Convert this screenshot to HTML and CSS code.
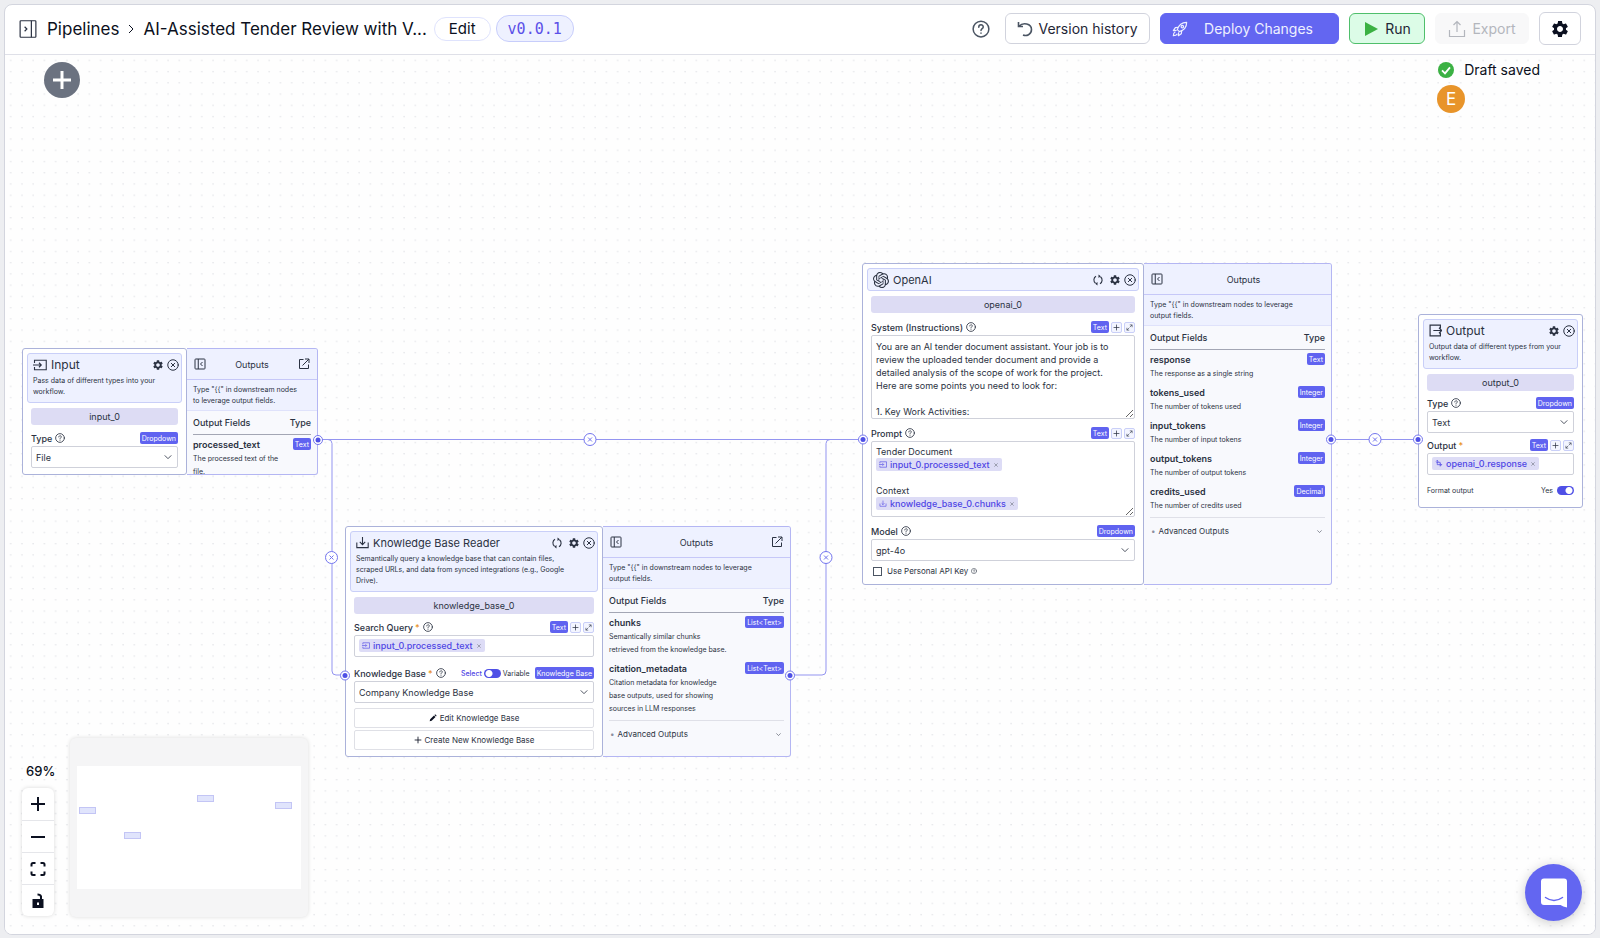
FILE: index.html
```html
<!DOCTYPE html>
<html lang="en">
<head>
    <meta charset="UTF-8">
    <meta name="viewport" content="width=device-width, initial-scale=1.0">
    <title>AI-Assisted Tender Review - Pipelines</title>
    <link rel="stylesheet" href="styles.css">
</head>
<body>
    <!-- icon sprite -->
    <svg class="sprite" aria-hidden="true">
        <symbol id="i-gear" viewBox="0 0 24 24"><path fill="currentColor" d="M19.14 12.94c.04-.3.06-.61.06-.94 0-.32-.02-.64-.07-.94l2.03-1.58c.18-.14.23-.41.12-.61l-1.92-3.32c-.12-.22-.37-.29-.59-.22l-2.39.96c-.5-.38-1.03-.7-1.62-.94l-.36-2.54c-.04-.24-.24-.41-.48-.41h-3.84c-.24 0-.43.17-.47.41l-.36 2.54c-.59.24-1.13.57-1.62.94l-2.39-.96c-.22-.08-.47 0-.59.22L2.74 8.87c-.12.21-.08.47.12.61l2.03 1.58c-.05.3-.09.63-.09.94s.02.64.07.94l-2.03 1.58c-.18.14-.23.41-.12.61l1.92 3.32c.12.22.37.29.59.22l2.39-.96c.5.38 1.03.7 1.62.94l.36 2.54c.05.24.24.41.48.41h3.84c.24 0 .44-.17.47-.41l.36-2.54c.59-.24 1.13-.56 1.62-.94l2.39.96c.22.08.47 0 .59-.22l1.92-3.32c.12-.22.07-.47-.12-.61l-2.01-1.58zM12 15.6c-1.98 0-3.6-1.62-3.6-3.6s1.62-3.6 3.6-3.6 3.6 1.62 3.6 3.6-1.62 3.6-3.6 3.6z"/></symbol>
        <symbol id="i-close" viewBox="0 0 24 24"><g fill="none" stroke="currentColor" stroke-width="2" stroke-linecap="round"><circle cx="12" cy="12" r="10.500"/><path d="M8.500 8.500l7 7M15.500 8.500l-7 7"/></g></symbol>
        <symbol id="i-sync" viewBox="0 0 24 24"><g fill="none" stroke="currentColor" stroke-width="2.200"><path d="M8 4.500A8.500 8.500 0 0 0 7 18.500M16 19.500A8.500 8.500 0 0 0 17 5.500"/></g><path fill="currentColor" d="M13 .8v7L17.500 4.300zM11 23.200v-7l-4.500 3.500z"/></symbol>
        <symbol id="i-help" viewBox="0 0 24 24"><g fill="none" stroke="currentColor" stroke-width="2" stroke-linecap="round"><circle cx="12" cy="12" r="10.500"/><path d="M9 9.500c0-4 6-4 6-.3 0 2.300-3 2.500-3 4.800M12 17.300v.2"/></g></symbol>
        <symbol id="i-chevron" viewBox="0 0 24 24"><path fill="none" stroke="currentColor" stroke-width="2.500" stroke-linecap="round" stroke-linejoin="round" d="M3 8l9 9 9-9"/></symbol>
        <symbol id="i-expand" viewBox="0 0 24 24"><path fill="none" stroke="currentColor" stroke-width="2" d="M13 3h8v8M21 3l-8 8M11 21H3v-8M3 21l8-8"/></symbol>
        <symbol id="i-plus" viewBox="0 0 24 24"><path fill="none" stroke="currentColor" stroke-width="2.500" d="M12 2v20M2 12h20"/></symbol>
        <symbol id="i-x" viewBox="0 0 24 24"><path fill="none" stroke="currentColor" stroke-width="4" d="M2 2l20 20M22 2L2 22"/></symbol>
        <symbol id="i-panel-close" viewBox="0 0 24 24"><g fill="none" stroke="currentColor" stroke-width="2"><rect x="2" y="2" width="20" height="20" rx="1.500"/><path d="M8.500 2v20M17 8l-4 4 4 4"/></g></symbol>
        <symbol id="i-panel-open" viewBox="0 0 24 24"><g fill="none" stroke="currentColor" stroke-width="1.600"><rect x="1.500" y="1" width="21" height="22" rx="1"/><path d="M16.500 1v22"/><path d="M7.500 9l3 3-3 3"/></g></symbol>
        <symbol id="i-external" viewBox="0 0 24 24"><path fill="none" stroke="currentColor" stroke-width="2" d="M11 3H3v18h18v-8M14 2h8v8M22 2L9 15"/></symbol>
        <symbol id="i-input" viewBox="0 0 28 22"><path fill="none" stroke="currentColor" stroke-width="2.200" d="M3 7V1.500h23.500v19H3V15M0 11h16M12 6.500l4.500 4.500-4.500 4.500"/></symbol>
        <symbol id="i-output" viewBox="0 0 24 24"><path fill="none" stroke="currentColor" stroke-width="2.200" d="M21 8V2H2v20h19v-6M8 12h15M18.500 7l5 5-5 5"/></symbol>
        <symbol id="i-download" viewBox="0 0 24 24"><path fill="none" stroke="currentColor" stroke-width="2" d="M12 2v14M7 11l5 5 5-5M1.500 12v9.500h21V12"/></symbol>
        <symbol id="i-link" viewBox="0 0 24 24"><path fill="none" stroke="currentColor" stroke-width="2.500" d="M6 2v14h15M17 12l4 4-4 4M16 22V8H3M10 5L6 1 2 5"/></symbol>
        <symbol id="i-pencil" viewBox="0 0 24 24"><path fill="currentColor" d="M2 22l1.500-6L15 4.500 19.500 9 8 20.500zM16.500 3l2-2 4.500 4.500-2 2z"/></symbol>
        <symbol id="i-openai" viewBox="0 0 24 24"><path fill="currentColor" d="M22.2819 9.8211a5.9847 5.9847 0 0 0-.5157-4.9108 6.0462 6.0462 0 0 0-6.5098-2.9A6.0651 6.0651 0 0 0 4.9807 4.1818a5.9847 5.9847 0 0 0-3.9977 2.9 6.0462 6.0462 0 0 0 .7427 7.0966 5.98 5.98 0 0 0 .511 4.9107 6.051 6.051 0 0 0 6.5146 2.9001A5.9847 5.9847 0 0 0 13.2599 24a6.0557 6.0557 0 0 0 5.7718-4.2058 5.9894 5.9894 0 0 0 3.9977-2.9001 6.0557 6.0557 0 0 0-.7475-7.0729zm-9.022 12.6081a4.4755 4.4755 0 0 1-2.8764-1.0408l.1419-.0804 4.7783-2.7582a.7948.7948 0 0 0 .3927-.6813v-6.7369l2.02 1.1686a.071.071 0 0 1 .038.052v5.5826a4.504 4.504 0 0 1-4.4945 4.4944zm-9.6607-4.1254a4.4708 4.4708 0 0 1-.5346-3.0137l.142.0852 4.783 2.7582a.7712.7712 0 0 0 .7806 0l5.8428-3.3685v2.3324a.0804.0804 0 0 1-.0332.0615L9.74 19.9502a4.4992 4.4992 0 0 1-6.1408-1.6464zM2.3408 7.8956a4.485 4.485 0 0 1 2.3655-1.9728V11.6a.7664.7664 0 0 0 .3879.6765l5.8144 3.3543-2.0201 1.1685a.0757.0757 0 0 1-.071 0l-4.8303-2.7865A4.504 4.504 0 0 1 2.3408 7.872zm16.5963 3.8558L13.1038 8.364 15.1192 7.2a.0757.0757 0 0 1 .071 0l4.8303 2.7913a4.4944 4.4944 0 0 1-.6765 8.1042v-5.6772a.79.79 0 0 0-.407-.667zm2.0107-3.0231l-.142-.0852-4.7735-2.7818a.7759.7759 0 0 0-.7854 0L9.409 9.2297V6.8974a.0662.0662 0 0 1 .0284-.0615l4.8303-2.7866a4.4992 4.4992 0 0 1 6.6802 4.66zM8.3065 12.863l-2.02-1.1638a.0804.0804 0 0 1-.038-.0567V6.0742a4.4992 4.4992 0 0 1 7.3757-3.4537l-.142.0805L8.704 5.459a.7948.7948 0 0 0-.3927.6813zm1.0976-2.3654l2.602-1.4998 2.6069 1.4998v2.9994l-2.5974 1.4997-2.6067-1.4997Z"/></symbol>
    </svg>

    <div class="app">
        <header class="topbar">
            <button class="icon-btn" aria-label="Open sidebar"><svg class="icon-18"><use href="#i-panel-open"/></svg></button>
            <nav class="crumbs">
                <a href="#">Pipelines</a>
                <svg class="crumb-arrow" viewBox="0 0 8 12"><path d="M2 2l4 4-4 4"/></svg>
                <span>AI-Assisted Tender Review with V...</span>
            </nav>
            <button class="pill">Edit</button>
            <span class="pill version">v0.0.1</span>
            <div class="actions">
                <button class="icon-btn help" aria-label="Help"><svg class="icon-18"><use href="#i-help"/></svg></button>
                <button class="btn history">
                    <svg class="icon-16" viewBox="0 0 16 16"><path fill="none" stroke="#4b5563" stroke-width="1.600" d="M1.500 1v4.500H6M2 5.200C6 1 14.500 2.500 14.500 8.500c0 5-5 7-8.500 5.500"/></svg>
                    Version history
                </button>
                <button class="btn deploy">
                    <svg class="icon-16" viewBox="0 0 24 24"><g fill="none" stroke="currentColor" stroke-width="1.800" stroke-linejoin="round"><path d="M8 13C10 6 15 2 22 2c0 7-4 12-11 14z"/><path d="M9 9.500L5 10l-3 4.500 5-.5M14.500 15L14 19l-4.500 3 .5-5M5 16c-2 1-3 3-3 6 3 0 5-1 6-3"/><circle cx="15.500" cy="8.500" r="1.800"/></g></svg>
                    <span>Deploy Changes</span>
                </button>
                <button class="btn run">
                    <svg class="icon-16" viewBox="0 0 16 16"><path fill="#3bb143" d="M2 1l13 7-13 7z"/></svg>
                    Run
                </button>
                <button class="btn export" disabled>
                    <svg class="icon-18" viewBox="0 0 18 18"><path fill="none" stroke="currentColor" stroke-width="1.200" d="M9 12V1.500M5.500 5L9 1.500 12.500 5M1.500 10v6.500h15V10"/></svg>
                    Export
                </button>
                <button class="btn settings" aria-label="Settings"><svg class="icon-20"><use href="#i-gear"/></svg></button>
            </div>
        </header>

        <main class="canvas">
            <svg class="dots" aria-hidden="true">
                <defs>
                    <pattern id="dot" x="0" y="0" width="11.24" height="11.24" patternUnits="userSpaceOnUse"><circle cx="5.700" cy="5.500" r=".7" fill="#dcdde1"/></pattern>
                </defs>
                <rect width="100%" height="100%" fill="url(#dot)"/>
            </svg>

            <div class="viewport">
                <svg class="edges" width="1600" height="938" aria-hidden="true">
                    <g fill="none" stroke="#9394f0">
                        <path d="M318 439.500H863M318 439.500H328q4 0 4 4V671q0 4 4 4H345M790 675H822q4 0 4-4V443.500q0-4 4-4H863M1331 439.500H1418"/>
                    </g>
                    <g fill="#fff" stroke="#7375ee">
                        <circle cx="590" cy="439.500" r="6"/><circle cx="331.500" cy="557.500" r="6"/><circle cx="826" cy="557.500" r="6"/><circle cx="1375" cy="439.500" r="6"/>
                        <path d="M588 437.500l4 4m0-4l-4 4M329.500 555.500l4 4m0-4l-4 4M824 555.500l4 4m0-4l-4 4M1373 437.500l4 4m0-4l-4 4"/>
                    </g>
                </svg>

                <section class="node node-input">
                    <div class="card">
                        <div class="card-head">
                            <div class="title-row">
                                <svg class="icon-input"><use href="#i-input"/></svg>
                                <h2>Input</h2>
                                <button aria-label="Node settings"><svg class="icon-12"><use href="#i-gear"/></svg></button>
                                <button aria-label="Delete node"><svg class="icon-12"><use href="#i-close"/></svg></button>
                            </div>
                            <p>Pass data of different types into your workflow.</p>
                        </div>
                        <div class="fields">
                            <input class="node-id" value="input_0" aria-label="Node name">
                            <div class="field">
                                <div class="label-row"><label for="in-type">Type</label><svg class="icon-10"><use href="#i-help"/></svg><span class="badge">Dropdown</span></div>
                                <div class="select"><select id="in-type"><option>File</option></select><svg><use href="#i-chevron"/></svg></div>
                            </div>
                        </div>
                    </div>
                    <div class="outputs">
                        <div class="out-head">
                            <button aria-label="Collapse"><svg class="icon-12"><use href="#i-panel-close"/></svg></button>
                            <h3>Outputs</h3>
                            <button aria-label="Open"><svg class="icon-12"><use href="#i-external"/></svg></button>
                        </div>
                        <p class="out-info">Type "{{" in downstream nodes to leverage output fields.</p>
                        <table>
                            <thead><tr><th>Output Fields</th><th>Type</th></tr></thead>
                            <tbody><tr><td><b>processed_text</b><p>The processed text of the file.</p></td><td><span class="badge">Text</span></td></tr></tbody>
                        </table>
                    </div>
                </section>

                <section class="node node-kb">
                    <div class="card">
                        <div class="card-head">
                            <div class="title-row">
                                <svg class="icon-14"><use href="#i-download"/></svg>
                                <h2>Knowledge Base Reader</h2>
                                <button class="sync" aria-label="Refresh"><svg class="icon-12"><use href="#i-sync"/></svg></button>
                                <button aria-label="Node settings"><svg class="icon-12"><use href="#i-gear"/></svg></button>
                                <button aria-label="Delete node"><svg class="icon-12"><use href="#i-close"/></svg></button>
                            </div>
                            <p>Semantically query a knowledge base that can contain files, scraped URLs, and data from synced integrations (e.g., Google Drive).</p>
                        </div>
                        <div class="fields">
                            <input class="node-id" value="knowledge_base_0" aria-label="Node name">
                            <div class="field">
                                <div class="label-row"><span id="kb-q">Search Query</span><i>*</i><svg class="icon-10"><use href="#i-help"/></svg><span class="badge">Text</span><button class="mini" aria-label="Add"><svg><use href="#i-plus"/></svg></button><button class="mini" aria-label="Expand"><svg><use href="#i-expand"/></svg></button></div>
                                <div class="box" role="textbox" contenteditable="true" aria-labelledby="kb-q" spellcheck="false"><span class="chip"><svg><use href="#i-input"/></svg>input_0.processed_text<svg class="rm"><use href="#i-x"/></svg></span></div>
                            </div>
                            <div class="field kb-field">
                                <div class="label-row"><label for="kb-sel">Knowledge Base</label><i>*</i><svg class="icon-10"><use href="#i-help"/></svg>
                                    <label class="mode"><b>Select</b><input type="checkbox" class="switch left"><span>Variable</span></label>
                                    <span class="badge">Knowledge Base</span></div>
                                <div class="select"><select id="kb-sel"><option>Company Knowledge Base</option></select><svg><use href="#i-chevron"/></svg></div>
                            </div>
                            <div class="kb-actions">
                                <button><svg><use href="#i-pencil"/></svg>Edit Knowledge Base</button>
                                <button><svg><use href="#i-plus"/></svg>Create New Knowledge Base</button>
                            </div>
                        </div>
                    </div>
                    <div class="outputs">
                        <div class="out-head">
                            <button aria-label="Collapse"><svg class="icon-12"><use href="#i-panel-close"/></svg></button>
                            <h3>Outputs</h3>
                            <button aria-label="Open"><svg class="icon-12"><use href="#i-external"/></svg></button>
                        </div>
                        <p class="out-info">Type "{{" in downstream nodes to leverage output fields.</p>
                        <table>
                            <thead><tr><th>Output Fields</th><th>Type</th></tr></thead>
                            <tbody>
                                <tr><td><b>chunks</b><p>Semantically similar chunks retrieved from the knowledge base.</p></td><td><span class="badge">List&lt;Text&gt;</span></td></tr>
                                <tr><td><b>citation_metadata</b><p>Citation metadata for knowledge base outputs, used for showing sources in LLM responses</p></td><td><span class="badge">List&lt;Text&gt;</span></td></tr>
                            </tbody>
                        </table>
                        <button class="advanced"><span>Advanced Outputs</span><svg><use href="#i-chevron"/></svg></button>
                    </div>
                </section>

                <section class="node node-openai">
                    <div class="card">
                        <div class="card-head">
                            <div class="title-row">
                                <svg class="icon-16"><use href="#i-openai"/></svg>
                                <h2>OpenAI</h2>
                                <button class="sync" aria-label="Refresh"><svg class="icon-12"><use href="#i-sync"/></svg></button>
                                <button aria-label="Node settings"><svg class="icon-12"><use href="#i-gear"/></svg></button>
                                <button aria-label="Delete node"><svg class="icon-12"><use href="#i-close"/></svg></button>
                            </div>
                        </div>
                        <div class="fields">
                            <input class="node-id" value="openai_0" aria-label="Node name">
                            <div class="field">
                                <div class="label-row"><label for="ai-sys">System (Instructions)</label><svg class="icon-10"><use href="#i-help"/></svg><span class="badge">Text</span><button class="mini" aria-label="Add"><svg><use href="#i-plus"/></svg></button><button class="mini" aria-label="Expand"><svg><use href="#i-expand"/></svg></button></div>
                                <textarea id="ai-sys" class="box system" spellcheck="false">You are an AI tender document assistant. Your job is to review the uploaded tender document and provide a detailed analysis of the scope of work for the project. Here are some points you need to look for:

1. Key Work Activities:</textarea>
                            </div>
                            <div class="field">
                                <div class="label-row"><span id="ai-prompt">Prompt</span><svg class="icon-10"><use href="#i-help"/></svg><span class="badge">Text</span><button class="mini" aria-label="Add"><svg><use href="#i-plus"/></svg></button><button class="mini" aria-label="Expand"><svg><use href="#i-expand"/></svg></button></div>
                                <div class="box prompt" role="textbox" contenteditable="true" aria-labelledby="ai-prompt" spellcheck="false">
                                    <div>Tender Document</div>
                                    <div><span class="chip"><svg><use href="#i-input"/></svg>input_0.processed_text<svg class="rm"><use href="#i-x"/></svg></span></div>
                                    <div><br></div>
                                    <div>Context</div>
                                    <div><span class="chip"><svg><use href="#i-download"/></svg>knowledge_base_0.chunks<svg class="rm"><use href="#i-x"/></svg></span></div>
                                </div>
                            </div>
                            <div class="field">
                                <div class="label-row"><label for="ai-model">Model</label><svg class="icon-10"><use href="#i-help"/></svg><span class="badge">Dropdown</span></div>
                                <div class="select"><select id="ai-model"><option>gpt-4o</option></select><svg><use href="#i-chevron"/></svg></div>
                            </div>
                            <label class="api-key"><input type="checkbox">Use Personal API Key<svg><use href="#i-help"/></svg></label>
                        </div>
                    </div>
                    <div class="outputs">
                        <div class="out-head">
                            <button aria-label="Collapse"><svg class="icon-12"><use href="#i-panel-close"/></svg></button>
                            <h3>Outputs</h3>
                        </div>
                        <p class="out-info">Type "{{" in downstream nodes to leverage output fields.</p>
                        <table>
                            <thead><tr><th>Output Fields</th><th>Type</th></tr></thead>
                            <tbody>
                                <tr><td><b>response</b><p>The response as a single string</p></td><td><span class="badge">Text</span></td></tr>
                                <tr><td><b>tokens_used</b><p>The number of tokens used</p></td><td><span class="badge">Integer</span></td></tr>
                                <tr><td><b>input_tokens</b><p>The number of input tokens</p></td><td><span class="badge">Integer</span></td></tr>
                                <tr><td><b>output_tokens</b><p>The number of output tokens</p></td><td><span class="badge">Integer</span></td></tr>
                                <tr><td><b>credits_used</b><p>The number of credits used</p></td><td><span class="badge">Decimal</span></td></tr>
                            </tbody>
                        </table>
                        <button class="advanced"><span>Advanced Outputs</span><svg><use href="#i-chevron"/></svg></button>
                    </div>
                </section>

                <section class="node node-output">
                    <div class="card">
                        <div class="card-head">
                            <div class="title-row">
                                <svg class="icon-14"><use href="#i-output"/></svg>
                                <h2>Output</h2>
                                <button aria-label="Node settings"><svg class="icon-12"><use href="#i-gear"/></svg></button>
                                <button aria-label="Delete node"><svg class="icon-12"><use href="#i-close"/></svg></button>
                            </div>
                            <p>Output data of different types from your workflow.</p>
                        </div>
                        <div class="fields">
                            <input class="node-id" value="output_0" aria-label="Node name">
                            <div class="field">
                                <div class="label-row"><label for="out-type">Type</label><svg class="icon-10"><use href="#i-help"/></svg><span class="badge">Dropdown</span></div>
                                <div class="select"><select id="out-type"><option>Text</option></select><svg><use href="#i-chevron"/></svg></div>
                            </div>
                            <div class="field">
                                <div class="label-row"><span id="out-val">Output</span><i>*</i><span class="badge">Text</span><button class="mini" aria-label="Add"><svg><use href="#i-plus"/></svg></button><button class="mini" aria-label="Expand"><svg><use href="#i-expand"/></svg></button></div>
                                <div class="box" role="textbox" contenteditable="true" aria-labelledby="out-val" spellcheck="false"><span class="chip"><svg><use href="#i-link"/></svg>openai_0.response<svg class="rm"><use href="#i-x"/></svg></span></div>
                            </div>
                            <label class="format"><span>Format output</span><span>Yes</span><input type="checkbox" class="switch" checked></label>
                        </div>
                    </div>
                </section>

                <!-- connection handles -->
                <svg class="edges handles" width="1600" height="938" aria-hidden="true">
                    <g fill="#fff" stroke="#7375ee">
                        <circle cx="318" cy="440" r="4.500"/><circle cx="345" cy="675.500" r="4.500"/><circle cx="790" cy="675.500" r="4.500"/><circle cx="863" cy="439.500" r="4.500"/><circle cx="1331" cy="439.500" r="4.500"/><circle cx="1418" cy="439.500" r="4.500"/>
                    </g>
                    <g fill="#4f50e6">
                        <circle cx="318" cy="440" r="2.500"/><circle cx="345" cy="675.500" r="2.500"/><circle cx="790" cy="675.500" r="2.500"/><circle cx="863" cy="439.500" r="2.500"/><circle cx="1331" cy="439.500" r="2.500"/><circle cx="1418" cy="439.500" r="2.500"/>
                    </g>
                </svg>
            </div>

            <button class="add-node" aria-label="Add node"><svg viewBox="0 0 20 20"><path d="M10 1v18M1 10h18"/></svg></button>

            <div class="status">
                <div class="saved"><svg viewBox="0 0 16 16"><circle cx="8" cy="8" r="8" fill="#3bb143"/><path fill="none" stroke="#fff" stroke-width="1.800" d="M4 8.300l3 3 5-6"/></svg>Draft saved</div>
                <div class="avatar">E</div>
            </div>

            <div class="zoom">
                <span>69%</span>
                <div class="zoom-buttons">
                    <button aria-label="Zoom in"><svg viewBox="0 0 16 16"><path d="M8 1v14M1 8h14"/></svg></button>
                    <button aria-label="Zoom out"><svg viewBox="0 0 16 16"><path d="M1 8h14"/></svg></button>
                    <button aria-label="Fit view"><svg viewBox="0 0 16 16"><path d="M1.500 5.500V3.500q0-1.500 1.500-1.500H5.500M10.500 2H13q1.500 0 1.500 1.500V5.500M14.500 10.500V12.500q0 1.500-1.500 1.500H10.500M5.500 14H3q-1.500 0-1.500-1.500V10.500"/></svg></button>
                    <button aria-label="Toggle lock"><svg viewBox="0 0 16 16"><path fill="#0b1020" stroke="none" fill-rule="evenodd" d="M2.500 6h11v9h-11zM7 9.500v2.500h2V9.500z"/><path d="M11 6V3.500Q10.500 1.500 7.500 1.500"/></svg></button>
                </div>
            </div>

            <div class="minimap">
                <svg viewBox="0 0 224 123">
                    <rect width="224" height="123" fill="#fff"/>
                    <g fill="#e0e4fc" stroke="#c3c5f5">
                        <rect x="2.500" y="41.500" width="16" height="6"/><rect x="47.500" y="66.500" width="16" height="6"/><rect x="120.500" y="29.500" width="16" height="6"/><rect x="198.500" y="36.500" width="16" height="6"/>
                    </g>
                </svg>
            </div>

            <button class="chat" aria-label="Open chat"><svg viewBox="0 0 26 30"><path fill="#fff" d="M3 .5h20q3 0 3 3V29.500q-4-1-6.500-2.500H3q-3 0-3-3V3.500q0-3 3-3z"/><path fill="none" stroke="#6366f1" stroke-width="1.500" stroke-linecap="round" d="M4.500 19.500q8.500 6 17 0"/></svg></button>
        </main>
    </div>
</body>
</html>
```
FILE: styles.css
```css
* {
    box-sizing: border-box;
}
body {
    margin: 0;
    height: 100vh;
    padding: 4px 4px 3px;
    background: #edeef1;
    font-family: Inter, sans-serif;
    color: #0b1020;
    overflow: hidden;
}
button, input, select, textarea {
    font: inherit;
    color: inherit;
}
button {
    display: flex;
    align-items: center;
    justify-content: center;
    padding: 0;
    border: none;
    background: none;
    cursor: pointer;
}
svg {
    display: block;
    flex: none;
}
h2, h3, p {
    margin: 0;
    font-weight: 400;
}
.sprite {
    position: absolute;
    width: 0;
    height: 0;
}
.icon-10 { width: 10px; height: 10px; }
.icon-12 { width: 12px; height: 12px; }
.icon-14 { width: 13px; height: 13px; }
.icon-16 { width: 16px; height: 16px; }
.icon-18 { width: 18px; height: 18px; }
.icon-20 { width: 20px; height: 20px; }
.icon-input { width: 14px; height: 12px; }

.app {
    display: flex;
    flex-direction: column;
    height: 100%;
    background: #fff;
    border: 1px solid #d3d5de;
    border-radius: 8px;
    overflow: hidden;
}

/* top bar */
.topbar {
    display: flex;
    align-items: center;
    flex: none;
    height: 50px;
    padding: 0 14px 2px;
    border-bottom: 1px solid #dfe0e8;
}
.crumbs {
    display: flex;
    align-items: center;
    gap: 8px;
    margin: 0 7px 0 10px;
    font-size: 17px;
    white-space: nowrap;
}
.crumbs a {
    color: inherit;
    text-decoration: none;
}
.crumb-arrow {
    width: 8px;
    height: 12px;
    fill: none;
    stroke: #0b1020;
}
.icon-btn {
    color: #2b3242;
}
.pill {
    display: flex;
    align-items: center;
    height: 24px;
    padding: 0 14px;
    border: 1px solid #dfe3fd;
    border-radius: 13px;
    font-size: 15px;
}
.version {
    height: 27px;
    margin-left: 5px;
    padding: 0 11px;
    border-color: #c7cdfb;
    background: #eef1ff;
    color: #5b50e8;
    font-family: "DejaVu Sans Mono", monospace;
}
.actions {
    display: flex;
    align-items: center;
    gap: 10px;
    margin-left: auto;
}
.help {
    margin-right: 5px;
    color: #4b5563;
}
.btn {
    height: 31px;
    gap: 5px;
    padding: 0 14px;
    border: 1px solid #d1d3dd;
    border-radius: 6px;
    background: #fff;
    color: #1f2636;
    font-size: 14px;
    white-space: nowrap;
}
.history {
    width: 145px;
    padding: 0;
}
.deploy {
    width: 179px;
    padding: 0 25px 0 11px;
    justify-content: space-between;
    border-color: #6366f1;
    background: #6366f1;
    color: #eef0ff;
}
.run {
    width: 76px;
    gap: 6px;
    padding: 0;
    border-color: #4fbf6b;
    background: #dcfce7;
}
.export {
    width: 94px;
    gap: 6px;
    padding: 0;
    border-color: #f8f8f9;
    background: #f8f8f9;
    color: #b3b6bd;
}
.settings {
    width: 42px;
    height: 33px;
    padding: 0;
    color: #0b1020;
}

/* canvas */
.canvas {
    position: relative;
    flex: 1;
    background: #fefefe;
    overflow: hidden;
}
.dots {
    position: absolute;
    width: 100%;
    height: 100%;
}
.viewport {
    position: absolute;
    left: -5px;
    top: -55px;
}
.edges {
    position: absolute;
}
.handles {
    pointer-events: none;
}
.node {
    position: absolute;
    display: flex;
    font-size: 9px;
    color: #2b3242;
}
.node-input { left: 22px; top: 348px; width: 296px; height: 127px; }
.node-kb { left: 345px; top: 526px; width: 446px; height: 231px; }
.node-openai { left: 862px; top: 263px; width: 470px; height: 322px; }
.node-output { left: 1418px; top: 314px; width: 165px; height: 194px; }
.card {
    flex: 1;
    padding: 4px;
    border: 1px solid #abb2da;
    border-radius: 3px;
    background: #fff;
}
.card-head {
    padding: 0 2px 0 5px;
    border: 1px solid #c9cff8;
    border-radius: 3px;
    background: #eef1ff;
}
.title-row {
    display: flex;
    align-items: center;
    gap: 3px;
    height: 21px;
}
.title-row h2 {
    flex: 1;
    margin-left: 1px;
    font-size: 12px;
}
.node-kb h2,
.node-openai h2 {
    font-size: 11px;
}
.title-row .sync {
    margin-right: 2px;
}
.card-head p {
    padding-bottom: 5px;
    font-size: 7px;
    line-height: 11px;
}
.node-kb .card-head p {
    padding-right: 16px;
}
.fields {
    display: flex;
    flex-direction: column;
    gap: 8px;
    padding: 5px 4px 0;
}
.node-input .fields,
.node-kb .fields {
    gap: 7px;
}
.node-output .fields {
    gap: 6px;
}
.node-id {
    width: 100%;
    height: 17px;
    padding: 0;
    border: none;
    border-radius: 3px;
    background: #dddcf4;
    text-align: center;
}
.kb-field {
    margin-top: 3px;
}
.label-row {
    display: flex;
    align-items: center;
    gap: 2px;
    height: 12px;
    margin-bottom: 2px;
    font-weight: 500;
}
.label-row i {
    color: #e8901c;
    font-style: normal;
}
.label-row .icon-10 {
    margin-left: 1px;
}
.label-row .badge {
    margin-left: auto;
}
.badge {
    display: inline-flex;
    align-items: center;
    height: 12px;
    padding: 0 2px;
    border-radius: 2px;
    background: #6063f0;
    color: #fff;
    font-size: 7px;
    font-weight: 400;
}
.mini {
    width: 11px;
    height: 11px;
    border: 1px solid #c9cff8;
    border-radius: 2px;
    background: #f3f5ff;
}
.mini svg {
    width: 7px;
    height: 7px;
}
.select {
    display: flex;
    align-items: center;
    height: 22px;
    padding-right: 5px;
    border: 1px solid #cfd1da;
    border-radius: 2px;
    background: #fff;
}
.select select {
    flex: 1;
    height: 100%;
    padding: 0 4px;
    border: none;
    background: none;
    appearance: none;
}
.select svg {
    width: 8px;
    height: 8px;
}
.box {
    display: block;
    min-height: 22px;
    padding: 3px 4px;
    border: 1px solid #cfd1da;
    border-radius: 2px;
    background: #fff;
    line-height: 13px;
}
.system {
    width: 100%;
    height: 84px;
    padding: 4px 12px 4px 4px;
    overflow: hidden;
}
.prompt {
    height: 76px;
    resize: vertical;
    overflow: hidden;
}
.chip {
    display: inline-flex;
    align-items: center;
    gap: 3px;
    height: 13px;
    padding: 0 3px;
    border-radius: 2px;
    background: #dddcf6;
    color: #4f46e5;
    font-weight: 500;
    vertical-align: top;
}
.chip svg {
    width: 8px;
    height: 7px;
}
.chip .rm {
    width: 4px;
    height: 4px;
    margin: 0 1px;
    color: #7a7f8c;
}
.mode {
    display: flex;
    align-items: center;
    gap: 2px;
    margin-left: auto;
    font-size: 7px;
    font-weight: 400;
}
.mode b {
    color: #4f46e5;
    font-weight: 500;
}
.label-row .mode + .badge {
    margin-left: 3px;
}
.switch {
    width: 17px;
    height: 9px;
    margin: 0;
    border-radius: 5px;
    background: radial-gradient(circle at 12px, #fff 3px, #4f50e6 4px);
    appearance: none;
}
.switch.left {
    background: radial-gradient(circle at 5px, #fff 3px, #4f50e6 4px);
}
.kb-actions {
    display: flex;
    flex-direction: column;
    gap: 2px;
    margin-top: -2px;
}
.kb-actions button {
    height: 20px;
    gap: 3px;
    border: 1px solid #dfe0e6;
    border-radius: 2px;
    font-size: 8px;
}
.kb-actions svg {
    width: 8px;
    height: 8px;
    color: #0b1020;
}
.api-key {
    display: flex;
    align-items: center;
    gap: 5px;
    margin-top: -3px;
    font-size: 8px;
}
.api-key input {
    width: 9px;
    height: 9px;
    margin: 0 0 0 2px;
    border: 1px solid #4b5563;
    appearance: none;
}
.api-key svg {
    width: 6px;
    height: 6px;
    margin-left: -2px;
}
.format {
    display: flex;
    align-items: center;
    gap: 4px;
    font-size: 7px;
    margin-top: 5px;
}
.format span:first-child {
    flex: 1;
}

/* outputs panel */
.outputs {
    flex: none;
    width: 188px;
    border: 1px solid #b4b6f3;
    border-left: none;
    border-radius: 0 3px 3px 0;
    background: #f8f9fd;
    overflow: hidden;
}
.node-input .outputs {
    width: 131px;
}
.out-head {
    display: flex;
    align-items: center;
    height: 31px;
    padding: 0 7px;
    border-bottom: 1px solid #c6c8f8;
    background: #eef1ff;
}
.out-head h3 {
    flex: 1;
    font-size: 9px;
    text-align: center;
}
.out-info {
    height: 31px;
    padding: 4px 28px 4px 6px;
    border-bottom: 1px solid #dfe2fb;
    background: #eef1ff;
    font-size: 7px;
    line-height: 11px;
}
.node-input .out-info {
    padding-right: 18px;
}
.outputs table {
    width: calc(100% - 12px);
    margin: 0 6px;
    border-collapse: collapse;
}
.outputs th {
    height: 23px;
    padding: 0;
    border-bottom: 1px solid #a3a6b4;
    font-weight: 500;
    text-align: left;
}
.outputs td {
    padding: 3px 0;
    vertical-align: top;
}
.outputs th:last-child,
.outputs td:last-child {
    text-align: right;
}
.outputs td b {
    display: block;
    font-weight: 600;
    line-height: 14px;
}
.outputs td p {
    max-width: 122px;
    font-size: 7px;
    line-height: 13px;
}
.advanced {
    width: calc(100% - 12px);
    height: 28px;
    margin: 2px 6px 0;
    justify-content: space-between;
    border-top: 1px solid #dfe0e8;
    font-size: 8px;
}
.advanced span::before {
    content: "•";
    margin: 0 3px 0 1px;
    color: #8b8fa0;
}
.advanced svg {
    width: 5px;
    height: 5px;
    margin-right: 3px;
}

/* overlays */
.add-node {
    position: absolute;
    left: 39px;
    top: 7px;
    width: 36px;
    height: 36px;
    border-radius: 50%;
    background: #6b7280;
}
.add-node svg {
    width: 20px;
    height: 20px;
    stroke: #fff;
    stroke-width: 3;
}
.status {
    position: absolute;
    top: 6px;
    right: 55px;
    display: flex;
    flex-direction: column;
    gap: 6px;
}
.saved {
    display: flex;
    align-items: center;
    gap: 10px;
    padding-left: 1px;
    font-size: 14px;
    line-height: 18px;
}
.saved svg {
    width: 16px;
    height: 16px;
}
.avatar {
    width: 28px;
    height: 28px;
    border-radius: 50%;
    background: #e8942a;
    color: #fff;
    font-size: 17px;
    line-height: 28px;
    text-align: center;
}
.zoom {
    position: absolute;
    left: 17px;
    bottom: 18px;
    width: 32px;
    font-size: 13px;
    font-weight: 500;
}
.zoom span {
    display: block;
    margin: 0 0 8px 4px;
    line-height: 18px;
}
.zoom-buttons {
    border-radius: 6px;
    background: #fff;
    box-shadow: 0 0 4px rgba(0, 0, 0, .15);
}
.zoom-buttons button {
    width: 100%;
    height: 32px;
}
.zoom-buttons button + button {
    border-top: 1px solid #e5e6ea;
}
.zoom-buttons svg {
    width: 16px;
    height: 16px;
    fill: none;
    stroke: #0b1020;
    stroke-width: 2;
}
.minimap {
    position: absolute;
    left: 65px;
    bottom: 17px;
    width: 238px;
    height: 179px;
    display: flex;
    align-items: center;
    justify-content: center;
    border-radius: 6px;
    background: #f5f5f6;
    box-shadow: 0 0 4px rgba(0, 0, 0, .14);
}
.minimap svg {
    width: 224px;
    height: 123px;
}
.chat {
    position: absolute;
    right: 13px;
    bottom: 13px;
    width: 57px;
    height: 57px;
    border-radius: 50%;
    background: #6366f1;
    box-shadow: 0 2px 12px rgba(0, 0, 0, .2);
}
.chat svg {
    width: 26px;
    height: 30px;
}
```
